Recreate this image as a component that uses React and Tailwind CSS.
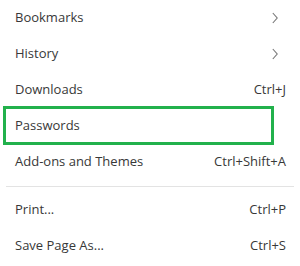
import React from "react";

function Chevron() {
  return (
    <svg width="6" height="12" viewBox="0 0 6 12" className="mr-[8px]">
      <path d="M0.8 1 L5.2 6 L0.8 11" fill="none" stroke="#777" strokeWidth="1.1" />
    </svg>
  );
}

function Row({ label, right, chevron, highlight }) {
  return (
    <div className="relative flex h-[36px] items-center justify-between pl-[15px] pr-[14px]">
      <span>{label}</span>
      {chevron ? <Chevron /> : <span>{right}</span>}
      {highlight && (
        <div className="absolute left-[3px] top-[-2px] h-[39px] w-[271px] border-[3px] border-[#22b14c]" />
      )}
    </div>
  );
}

export default function App() {
  return (
    <div
      className="h-[266px] w-[300px] bg-white text-[13px] text-[#383838]"
      style={{ fontFamily: '"Open Sans", "Noto Sans", sans-serif' }}
    >
      <Row label="Bookmarks" chevron />
      <Row label="History" chevron />
      <Row label="Downloads" right="Ctrl+J" />
      <Row label="Passwords" highlight />
      <Row label="Add-ons and Themes" right="Ctrl+Shift+A" />
      <div className="flex h-[12px] items-center px-[6px]">
        <div className="h-px w-full bg-[#e3e3e3]" />
      </div>
      <Row label="Print..." right="Ctrl+P" />
      <Row label="Save Page As..." right="Ctrl+S" />
    </div>
  );
}
